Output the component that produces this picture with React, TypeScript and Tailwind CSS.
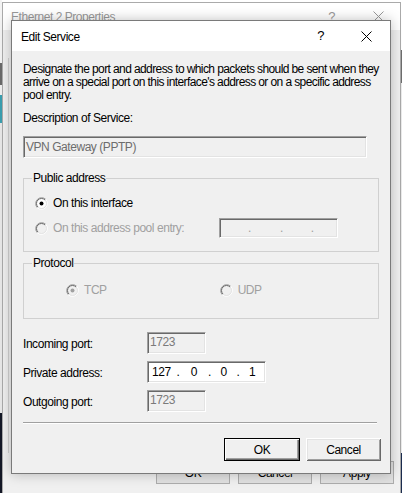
import React from 'react';

const sunken =
  'border-t border-l border-t-[#a0a0a0] border-l-[#a0a0a0] border-b border-r border-b-white border-r-white shadow-[inset_1px_1px_0_#696969,inset_-1px_-1px_0_#e3e3e3]';

function Radio({ checked, disabled }: { checked?: boolean; disabled?: boolean }) {
  return (
    <svg width="13" height="13" viewBox="0 0 13 13" className="shrink-0">
      <circle cx="6.5" cy="6.5" r="5" fill={disabled ? '#f0f0f0' : '#ffffff'} />
      <path d="M10.74 2.26 A6 6 0 0 0 2.26 10.74" fill="none" stroke="#a0a0a0" />
      <path d="M10.74 2.26 A6 6 0 0 1 2.26 10.74" fill="none" stroke="#ffffff" />
      <path d="M10.04 2.96 A5 5 0 0 0 2.96 10.04" fill="none" stroke="#696969" />
      <path d="M10.04 2.96 A5 5 0 0 1 2.96 10.04" fill="none" stroke="#e3e3e3" />
      {checked && <circle cx="6.5" cy="6.5" r="2" fill={disabled ? '#a0a0a0' : '#000000'} />}
    </svg>
  );
}

function CloseGlyph({ color = '#000' }: { color?: string }) {
  return (
    <svg width="11" height="11" viewBox="0 0 11 11">
      <path d="M0.5 0.5 L10.5 10.5 M10.5 0.5 L0.5 10.5" stroke={color} strokeWidth="1" />
    </svg>
  );
}

function GroupBox({ title, className, children }: { title: string; className?: string; children: React.ReactNode }) {
  return (
    <fieldset className={`border border-[#d0d0d0] ${className ?? ''}`}>
      <legend className="ml-[8px] px-[1px] leading-[13px]">{title}</legend>
      {children}
    </fieldset>
  );
}

function ClassicButton({ label, isDefault }: { label: string; isDefault?: boolean }) {
  return (
    <button
      className={`h-[23px] bg-[#f0f0f0] text-black ${
        isDefault
          ? 'w-[76px] border border-[#000] shadow-[inset_1px_1px_0_#fff,inset_-1px_-1px_0_#696969,inset_-2px_-2px_0_#a0a0a0]'
          : 'w-[75px] shadow-[inset_1px_1px_0_#fff,inset_-1px_-1px_0_#696969,inset_2px_2px_0_#e3e3e3,inset_-2px_-2px_0_#a0a0a0]'
      }`}
    >
      {label}
    </button>
  );
}

function PortBox({ value }: { value: string }) {
  return (
    <div className={`w-[59px] h-[22px] bg-[#f0f0f0] text-[#7a7a7a] pl-[2px] pt-[2px] leading-[14px] ${sunken}`}>
      {value}
    </div>
  );
}

export default function App() {
  return (
    <div className="relative w-[402px] h-[493px] overflow-hidden bg-white font-['Liberation_Sans',Arial,sans-serif] text-[12px] tracking-[-0.45px] text-black">
      {/* bits of other windows at the screen edges */}
      <div className="absolute left-0 top-0 w-[2px] h-[493px] flex flex-col">
        <div className="h-[63px] bg-[#f3f3f3]" />
        <div className="h-[22px] bg-[#6a6a6a]" />
        <div className="h-[10px] bg-[#f0f0f0]" />
        <div className="h-[28px] bg-[#3a9fb0]" />
        <div className="h-[290px] bg-[#e8e8e8]" />
        <div className="flex-1 bg-[#141826]" />
      </div>
      <div className="absolute right-0 top-0 w-[1px] h-[493px] flex flex-col">
        <div className="h-[50px] bg-white" />
        <div className="h-[33px] bg-[#6e6e6e]" />
        <div className="h-[370px] bg-[#ececec]" />
        <div className="flex-1 bg-[#1b2c4f]" />
      </div>

      {/* Ethernet 2 Properties (inactive, behind) */}
      <div className="absolute left-[2px] top-[2px] w-[399px] h-[500px] border border-[#aaaaaa] bg-[#f0f0f0] flex flex-col">
        <div className="h-[27px] bg-white flex items-center pl-[8px] text-[#999999] shrink-0">
          <span className="flex-1 pt-[1px]">Ethernet 2 Properties</span>
          <span className="mr-[38px] text-[13px]">?</span>
          <span className="mr-[16px]">
            <CloseGlyph color="#999999" />
          </span>
        </div>
        <div className="ml-[5px] mt-[28px] h-[395px] border-l border-[#d0d0d0]" />
        <div className="mt-[8px] flex justify-end gap-[8px] pr-[6px]">
          {['OK', 'Cancel', 'Apply'].map((b) => (
            <button key={b} className="w-[74px] h-[23px] bg-[#e1e1e1] border border-[#adadad] text-black">
              {b}
            </button>
          ))}
        </div>
      </div>

      {/* Edit Service dialog */}
      <div className="absolute left-[11px] top-[20px] w-[380px] h-[454px] border border-[#7a7a7a] bg-[#f0f0f0] shadow-[0_0_12px_rgba(0,0,0,0.25)] flex flex-col">
        <div className="h-[30px] bg-white flex items-center pl-[9px] shrink-0">
          <span className="flex-1 pt-[1px]">Edit Service</span>
          <span className="mr-[37px] text-[13px]">?</span>
          <span className="mr-[18px] flex">
            <CloseGlyph />
          </span>
        </div>

        <div className="px-[11px] pb-[11px] flex flex-col">
          <p className="mt-[12px] leading-[13px] whitespace-nowrap tracking-[-0.6px]">
            Designate the port and address to which packets should be sent when they
            <br />
            arrive on a special port on this interface's address or on a specific address
            <br />
            pool entry.
          </p>

          <div className="mt-[10px] leading-[13px]">Description of Service:</div>
          <div className={`mt-[11px] w-[344px] h-[22px] bg-[#f0f0f0] text-[#6d6d6d] pl-[2px] pt-[3px] leading-[14px] ${sunken}`}>
            VPN Gateway (PPTP)
          </div>

          <GroupBox title="Public address" className="mt-[14px] w-[356px] pt-[10px] pb-[13px]">
            <div className="pl-[11px]">
              <div className="h-[16px] flex items-center gap-[5px]">
                <Radio checked />
                <span>On this interface</span>
              </div>
              <div className="mt-[7px] h-[20px] flex items-center">
                <Radio disabled />
                <span className="ml-[5px] w-[166px] text-[#a0a0a0]">On this address pool entry:</span>
                <div className={`w-[119px] h-[20px] bg-[#f0f0f0] flex items-center text-[#a0a0a0] ${sunken}`}>
                  <span className="ml-[28px]">.</span>
                  <span className="ml-[29px]">.</span>
                  <span className="ml-[28px]">.</span>
                </div>
              </div>
            </div>
          </GroupBox>

          <GroupBox title="Protocol" className="mt-[5px] w-[356px] pt-[12px] pb-[20px]">
            <div className="h-[16px] flex items-center text-[#a0a0a0]">
              <span className="ml-[42px]">
                <Radio checked disabled />
              </span>
              <span className="ml-[5px]">TCP</span>
              <span className="ml-[113px]">
                <Radio disabled />
              </span>
              <span className="ml-[5px]">UDP</span>
            </div>
          </GroupBox>

          <div className="mt-[13px] flex flex-col gap-[7px]">
            <div className="h-[22px] flex items-center">
              <span className="w-[124px] pt-[2px]">Incoming port:</span>
              <PortBox value="1723" />
            </div>
            <div className="h-[22px] flex items-center">
              <span className="w-[124px] pt-[2px]">Private address:</span>
              <div className={`w-[119px] h-[22px] bg-white flex items-center ${sunken}`}>
                <span className="w-[29px] pl-[4px]">127</span>
                <span>.</span>
                <span className="w-[29px] text-center">0</span>
                <span>.</span>
                <span className="w-[26px] text-center">0</span>
                <span>.</span>
                <span className="w-[26px] text-center">1</span>
              </div>
            </div>
            <div className="h-[22px] flex items-center">
              <span className="w-[124px] pt-[2px]">Outgoing port:</span>
              <PortBox value="1723" />
            </div>
          </div>

          <div className="mt-[10px] w-[354px] h-[2px] border-t border-t-[#a0a0a0] border-b border-b-white" />

          <div className="mt-[14px] -mr-[2px] flex justify-end gap-[6px]">
            <ClassicButton label="OK" isDefault />
            <ClassicButton label="Cancel" />
          </div>
        </div>
      </div>
    </div>
  );
}
